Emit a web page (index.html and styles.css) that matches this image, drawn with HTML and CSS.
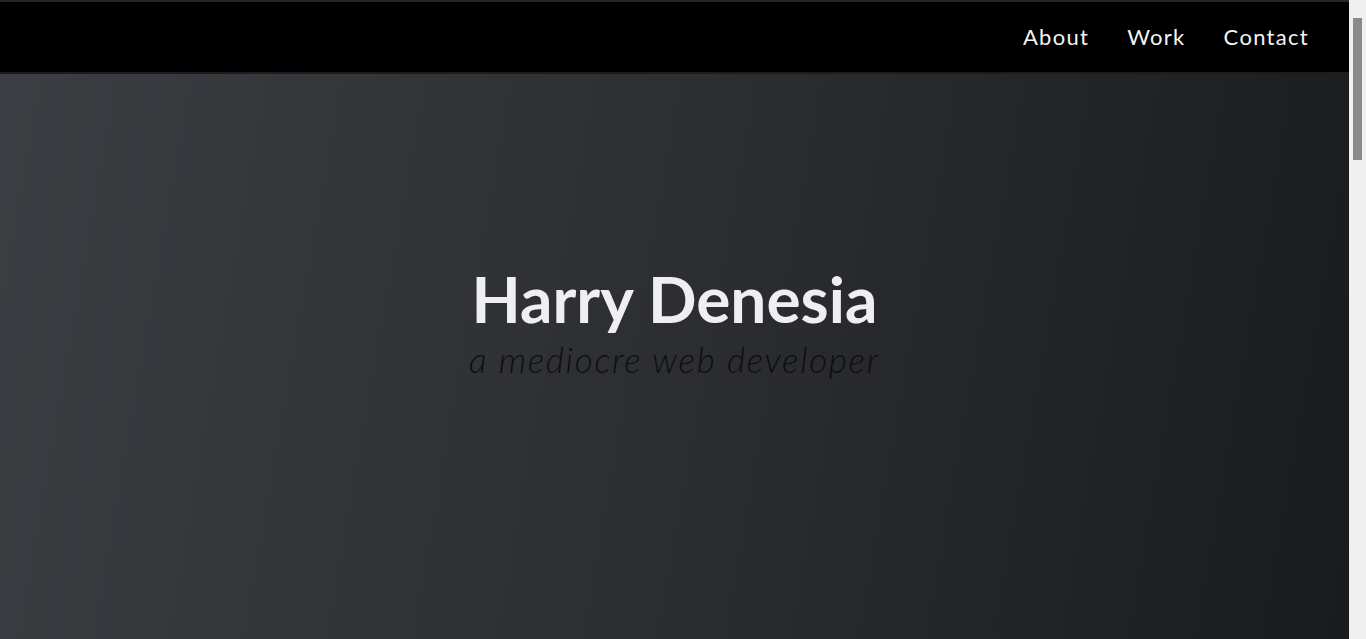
FILE: index.html
```html
<!DOCTYPE html>
<html lang="en">
<head>
<meta charset="utf-8">
<title>Harry Denesia</title>
<link rel="stylesheet" href="styles.css">
</head>
<body>
<header class="site-header">
  <nav class="nav">
    <a class="nav-link" href="#about">About</a>
    <a class="nav-link" href="#work">Work</a>
    <a class="nav-link" href="#contact">Contact</a>
  </nav>
</header>
<main class="page">
  <section class="hero">
    <h1 class="hero-title">Harry Denesia</h1>
    <p class="hero-sub">a mediocre web developer</p>
  </section>
  <section class="section" id="about"></section>
  <section class="section" id="work"></section>
  <section class="section" id="contact"></section>
</main>
<div class="scrollbar" aria-hidden="true"><div class="scrollbar-thumb"></div></div>
</body>
</html>
```
FILE: styles.css
```css
html {
  background: #1d1e20;
}
body {
  margin: 0;
  font-family: "Lato", "Open Sans", sans-serif;
  border-top: 2px solid #25252a;
}
.page {
  margin-right: 17px;
}
.site-header {
  position: fixed;
  top: 2px;
  left: 0;
  right: 17px;
  height: 70px;
  background: #000;
  border-bottom: 2px solid #1c1c1e;
  display: flex;
  justify-content: flex-end;
  align-items: center;
  z-index: 10;
}
.nav {
  display: flex;
  gap: 38px;
  padding-right: 40px;
  margin-top: -2px;
}
.nav-link {
  color: #f4f4f4;
  text-decoration: none;
  font-size: 22px;
  letter-spacing: 1.3px;
}
.hero {
  height: 637px;
  background: linear-gradient(100deg, #3b3e42 0%, #2c2e31 50%, #1a1b1d 100%);
  display: flex;
  flex-direction: column;
  align-items: center;
  justify-content: center;
  padding-top: 4px;
  box-sizing: border-box;
}
.hero-title {
  margin: 0;
  color: #efeff1;
  font-weight: 700;
  font-size: 64px;
  line-height: 64px;
}
.hero-sub {
  margin: 8px 0 0;
  color: #0e0e0f;
  font-weight: 300;
  font-style: italic;
  font-size: 35px;
  line-height: 40px;
  letter-spacing: 1.7px;
}
.section {
  height: 700px;
  background: #1d1e20;
}
.scrollbar {
  position: fixed;
  top: 0;
  right: 0;
  width: 17px;
  height: 100%;
  background: #f0f0f0;
  z-index: 20;
}
.scrollbar-thumb {
  position: absolute;
  top: 18px;
  left: 4px;
  width: 9px;
  height: 142px;
  background: #8a8a8a;
}
```
